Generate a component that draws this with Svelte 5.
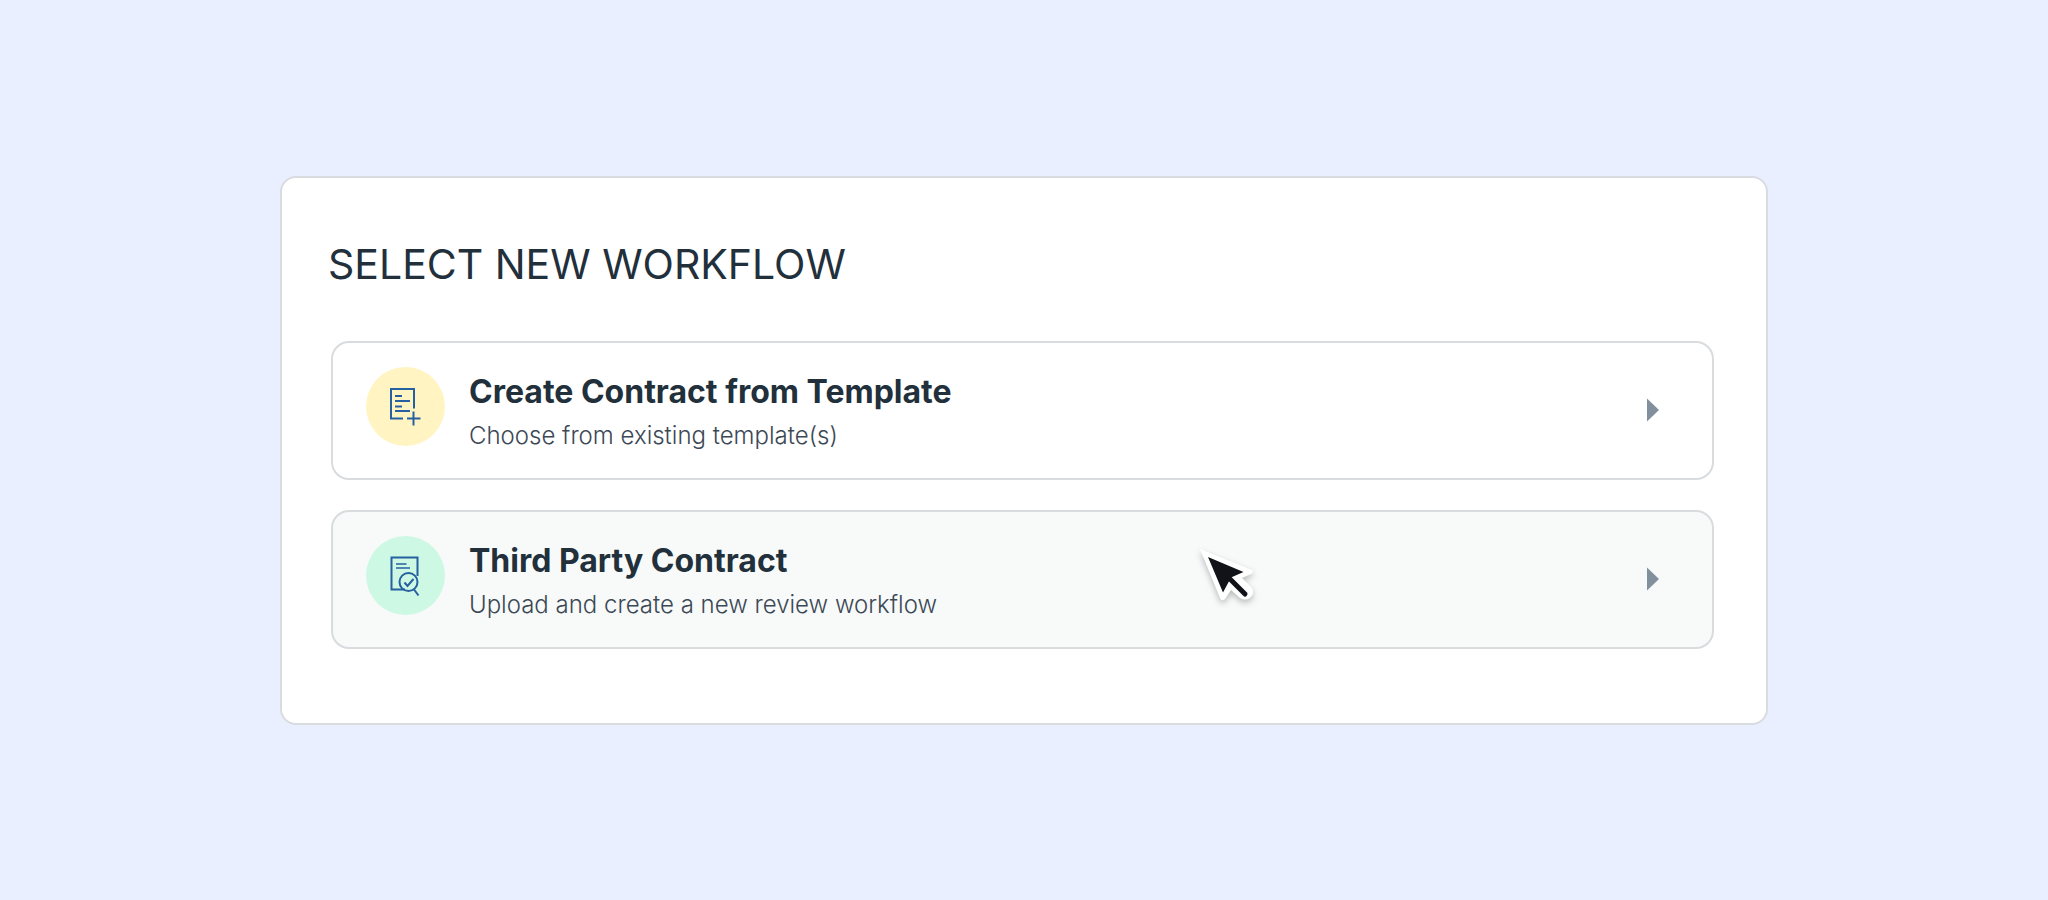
<script>
	let workflows = [
		{
			id: "template",
			title: "Create Contract from Template",
			description: "Choose from existing template(s)",
			active: false
		},
		{
			id: "third-party",
			title: "Third Party Contract",
			description: "Upload and create a new review workflow",
			active: true
		}
	];
</script>

<main class="page">
	<section class="card" aria-labelledby="heading">
		<h1 id="heading">SELECT NEW WORKFLOW</h1>

		<div class="options">
			{#each workflows as workflow (workflow.id)}
				<button type="button" class="option" class:active={workflow.active}>
					<span class="badge {workflow.id}">
						{#if workflow.id === "template"}
							<svg viewBox="0 0 79 79" aria-hidden="true">
								<path d="M48 41.500V22H25v29.500h12" />
								<path d="M29 29H36M29 34H44M29 39.500H36M29 44H44" />
								<path d="M47.500 44.500v14M41 51.500h13.500" />
							</svg>
						{:else}
							<svg viewBox="0 0 79 79" aria-hidden="true">
								<path d="M51.500 40V21.500H25.500V53.500H39" />
								<path class="thin" d="M30 28H40.500M30 32H44" />
								<circle cx="42.500" cy="46" r="9" />
								<path d="M38.500 46.500l3 3.500 6-7M48 53.500l4.500 6" />
							</svg>
						{/if}
					</span>
					<span class="text">
						<span class="title">{workflow.title}</span>
						<span class="description">{workflow.description}</span>
					</span>
					<svg class="arrow" viewBox="0 0 12 24" aria-hidden="true">
						<path d="M0 0.500L12 12L0 23.500z" />
					</svg>
					{#if workflow.active}
						<svg class="cursor" viewBox="-2 -1 70 70" aria-hidden="true">
							<path class="outline" d="M10 8L62 29Q64 31 61 33L52 37L62 47Q65 53 60 57Q55 60 50 57L41 49L35 58Q32 61 30 57z" />
							<path d="M18 16L53.500 31L41 36.500L33 51.500z" />
							<path class="tail" d="M39 37L55 53" />
						</svg>
					{/if}
				</button>
			{/each}
		</div>
	</section>
</main>

<style>
	:global(body) {
		margin: 0;
		background: #e9effe;
	}

	.page {
		display: flex;
		align-items: center;
		min-height: 100vh;
		box-sizing: border-box;
		padding: 24px 280px;
		font-family: Inter, sans-serif;
		color: #22303c;
	}

	.card {
		flex: 1;
		padding: 62px 44px 74px 46px;
		border: 2px solid #d8dcdf;
		border-radius: 16px;
		background: #fff;
	}

	h1 {
		margin: 0 0 53px;
		font-size: 41px;
		font-weight: 400;
		line-height: 48px;
	}

	.options {
		display: flex;
		flex-direction: column;
		gap: 30px;
		margin: 0 8px 0 3px;
	}

	.option {
		position: relative;
		display: flex;
		align-items: center;
		gap: 24px;
		width: 100%;
		padding: 24px 53px 24px 33px;
		border: 2px solid #d8dcdf;
		border-radius: 18px;
		background: #fff;
		font: inherit;
		color: inherit;
		text-align: left;
		cursor: pointer;
	}

	.option.active {
		background: #f7faf9;
	}

	.badge {
		align-self: flex-start;
		width: 79px;
		height: 79px;
		border-radius: 50%;
	}

	.badge svg {
		display: block;
		fill: none;
		stroke: #2660a0;
		stroke-width: 2;
	}

	.badge .thin {
		stroke-width: 1.5;
	}

	.template {
		background: #fff4c2;
	}

	.third-party {
		background: #cdf8e4;
	}

	.text {
		display: flex;
		flex: 1;
		flex-direction: column;
		gap: 6px;
		padding-top: 5px;
	}

	.title {
		font-size: 32px;
		font-weight: 700;
		line-height: 40px;
	}

	.description {
		font-size: 24px;
		font-weight: 300;
		line-height: 36px;
		color: #3c4855;
	}

	.arrow {
		width: 12px;
		height: 24px;
		fill: #82909d;
	}

	.cursor {
		position: absolute;
		top: 28px;
		left: 62%;
		width: 70px;
		height: 70px;
		fill: #111319;
		filter: drop-shadow(0 3px 3px rgba(0, 0, 0, 0.25));
	}

	.cursor .outline {
		fill: #fff;
	}

	.cursor .tail {
		stroke: #111319;
		stroke-width: 5;
		stroke-linecap: round;
	}
</style>
